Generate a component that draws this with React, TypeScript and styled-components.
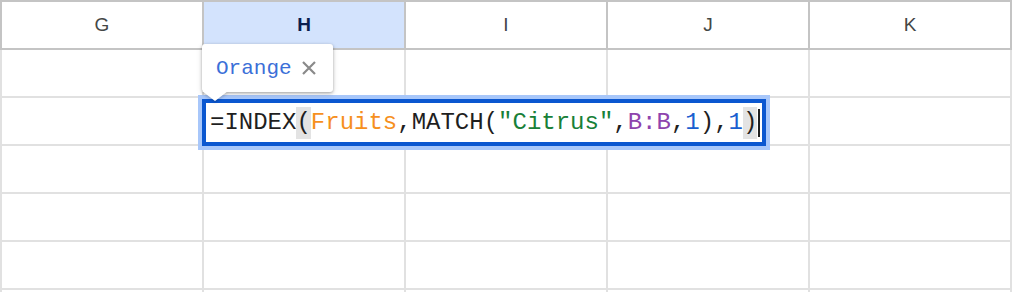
import styled, { createGlobalStyle } from "styled-components";

const GlobalStyle = createGlobalStyle`
  html, body {
    margin: 0;
    padding: 0;
    background: #fff;
  }
  body {
    font-family: "Liberation Sans", Arial, sans-serif;
  }
`;

const columns = ["G", "H", "I", "J", "K"];
const rowCount = 6;

const Sheet = styled.div`
  position: relative;
  width: 1012px;
  height: 292px;
  overflow: hidden;
`;

const Grid = styled.div`
  display: grid;
  grid-template-columns: 204px repeat(4, 202px);
  grid-auto-rows: 48px;
  border-top: 2px solid #c4c4c4;
`;

const HeaderCell = styled.div<{ $active?: boolean; $first?: boolean }>`
  display: flex;
  align-items: center;
  justify-content: center;
  box-sizing: border-box;
  border-right: 2px solid #c4c4c4;
  border-bottom: 2px solid #c4c4c4;
  border-left: ${(p) => (p.$first ? "2px solid #c4c4c4" : "none")};
  background: ${(p) => (p.$active ? "#d3e3fd" : "#fff")};
  color: ${(p) => (p.$active ? "#0b1f4f" : "#444746")};
  font-weight: ${(p) => (p.$active ? 700 : 400)};
  font-size: 19px;
`;

const Cell = styled.div<{ $first?: boolean }>`
  box-sizing: border-box;
  border-right: 2px solid #e1e1e1;
  border-bottom: 2px solid #e1e1e1;
  border-left: ${(p) => (p.$first ? "2px solid #e1e1e1" : "none")};
  background: #fff;
`;

const Editor = styled.div`
  position: absolute;
  left: 198px;
  top: 95px;
  width: 572px;
  height: 55px;
  box-sizing: border-box;
  border: 4px solid #a8c7fa;
  background: #fff;
`;

const EditorInner = styled.div`
  box-sizing: border-box;
  height: 100%;
  border: 4px solid #0b57d0;
  display: flex;
  align-items: center;
  padding-left: 4px;
  font-family: "Liberation Mono", "DejaVu Sans Mono", monospace;
  font-size: 24px;
  color: #1f1f1f;
  white-space: pre;
`;

const Token = styled.span<{ $color?: string; $match?: boolean }>`
  color: ${(p) => p.$color ?? "#1f1f1f"};
  background: ${(p) => (p.$match ? "#e3e3e3" : "transparent")};
  line-height: 32px;
`;

const Caret = styled.span`
  display: inline-block;
  width: 2px;
  height: 28px;
  background: #1f1f1f;
  margin-left: 1px;
`;

const Chip = styled.div`
  position: absolute;
  left: 202px;
  top: 44px;
  width: 131px;
  height: 48px;
  box-sizing: border-box;
  background: #fff;
  border-radius: 3px;
  box-shadow: 0 1px 3px rgba(0, 0, 0, 0.3), 0 2px 6px rgba(0, 0, 0, 0.12);
  display: flex;
  align-items: center;
  gap: 9px;
  padding-left: 14px;

  &::after {
    content: "";
    position: absolute;
    left: 0;
    top: 47px;
    width: 0;
    height: 0;
    border-left: 13px solid transparent;
    border-right: 13px solid transparent;
    border-top: 10px solid #fff;
    filter: drop-shadow(0 2px 1px rgba(0, 0, 0, 0.15));
  }
`;

const ChipLabel = styled.span`
  font-family: "Liberation Mono", "DejaVu Sans Mono", monospace;
  font-size: 21px;
  color: #3b6fd8;
`;

const Close = styled.svg`
  width: 16px;
  height: 16px;
  stroke: #8a8a8a;
  stroke-width: 2.2;
`;

const formula: { text: string; color?: string; match?: boolean }[] = [
  { text: "=INDEX" },
  { text: "(", match: true },
  { text: "Fruits", color: "#f6901e" },
  { text: ",MATCH(" },
  { text: '"Citrus"', color: "#188038" },
  { text: "," },
  { text: "B:B", color: "#8e44ad" },
  { text: "," },
  { text: "1", color: "#1a5fd0" },
  { text: ")," },
  { text: "1", color: "#1a5fd0" },
  { text: ")", match: true },
];

export default function App() {
  return (
    <>
      <GlobalStyle />
      <Sheet>
        <Grid>
          {columns.map((c, i) => (
            <HeaderCell key={c} $first={i === 0} $active={c === "H"}>
              {c}
            </HeaderCell>
          ))}
          {Array.from({ length: rowCount }).map((_, r) =>
            columns.map((c, i) => <Cell key={c + r} $first={i === 0} />)
          )}
        </Grid>
        <Editor>
          <EditorInner>
            {formula.map((t, i) => (
              <Token key={i} $color={t.color} $match={t.match}>
                {t.text}
              </Token>
            ))}
            <Caret />
          </EditorInner>
        </Editor>
        <Chip>
          <ChipLabel>Orange</ChipLabel>
          <Close viewBox="0 0 16 16" fill="none">
            <path d="M2 2L14 14M14 2L2 14" />
          </Close>
        </Chip>
      </Sheet>
    </>
  );
}
